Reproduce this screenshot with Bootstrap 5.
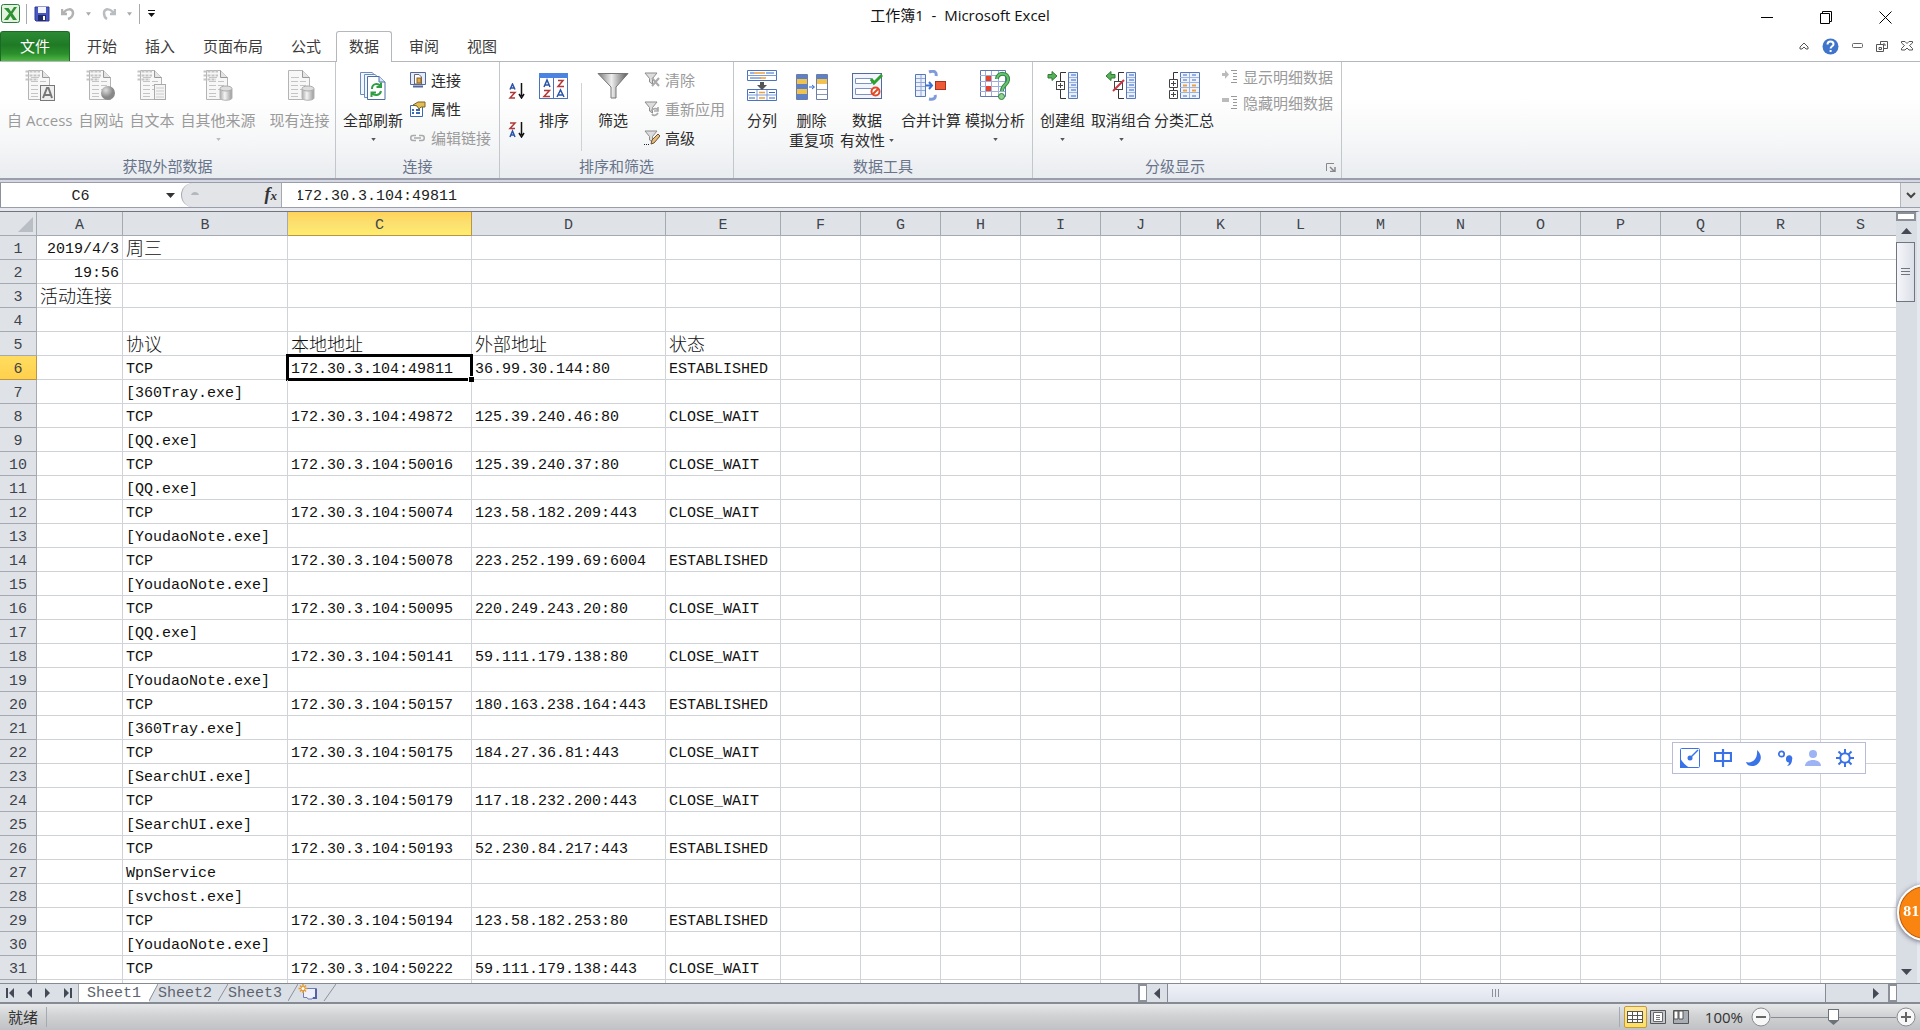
<!DOCTYPE html>
<html lang="zh-CN">
<head>
<meta charset="utf-8">
<meta name="viewport" content="width=device-width, initial-scale=1">
<title>工作簿1 - Microsoft Excel</title>
<link href="https://cdn.jsdelivr.net/npm/bootstrap@5.3.0/dist/css/bootstrap.min.css" rel="stylesheet">
<style>
  :root { --line: #8b909a; --steel: #dfe3e8; --ui: "Open Sans", "Noto Sans CJK SC", sans-serif; --mono: "Liberation Mono", "Noto Sans CJK SC", monospace; }
  body { font-family: var(--ui); font-size: 15px; line-height: 20px; color: #2b2b2b; background: #fff; }
  button { font: inherit; color: inherit; background: none; border: 0; padding: 0; }
  svg { display: block; flex: none; }
  .titlebar { height: 31px; }
  .titlebar h1 { font-size: 15px; line-height: 20px; font-weight: 400; color: #111; padding-top: 5px; }
  .side { flex: 1 1 0; }
  .quick { height: 20px; gap: 7px; }
  .vsep { width: 1px; background: #a5a9b0; }
  .tabs { height: 31px; border-bottom: 1px solid #b4b7bc; }
  .tabs .nav-link { height: 30px; padding: 4px 14px 0 12px; color: #3c3c3c; border: 1px solid transparent; border-bottom: 0; border-radius: 3px 3px 0 0; line-height: 20px; white-space: nowrap; }
  .tabs .nav-link.active { height: 31px; background: #fff; border-color: #b4b7bc; padding: 4px 12px 0; }
  .tabs .nav-link.file { width: 70px; padding: 4px 0 0; text-align: center; color: #fff; background: linear-gradient(#2c8a35, #1f7a25 45%, #2b8f2b 75%, #52b948); border-color: #1c6b24; }
  .wintools { gap: 13px; padding-right: 7px; }
  .ribbon { height: 118px; background: linear-gradient(#fff 30%, #f5f6f7 70%, #e9ecf0); border-bottom: 2px solid #9a9eab; }
  .group { border-right: 1px solid #c3c6cb; display: flex; flex-direction: column; }
  .group-body { flex: 1 1 0; min-height: 0; display: flex; align-items: flex-start; padding: 5px 4px 0; }
  .group-name { flex: none; text-align: center; color: #68748a; height: 22px; line-height: 20px; position: relative; }
  .g-ext { width: 336px; } .g-link { width: 164px; } .g-sort { width: 234px; } .g-tool { width: 299px; } .g-out { width: 309px; }
  .big { display: flex; flex-direction: column; align-items: center; margin-top: 3px; padding: 0 3px; white-space: nowrap; line-height: 20px; }
  .big svg.pic { width: 32px; height: 32px; margin-bottom: 8px; }
  .big .caret { margin-top: 8px; }
  .small-btn { display: flex; align-items: center; gap: 5px; white-space: nowrap; height: 20px; }
  button:disabled { color: #9a9a9a; }
  .stack { display: flex; flex-direction: column; gap: 9px; margin-top: 3px; }
  .stack.tight { gap: 6px; margin-top: 0; }
  .gsep { width: 1px; height: 68px; background: #d0d2d6; }
  .launcher { position: absolute; right: 5px; top: 7px; }
  .formula { height: 31px; background: linear-gradient(#d5d7e2 0 2px, #9a9eab 2px 3px, #fff 3px 27px, #9a9eab 27px 28px, #e6e8ee 28px 31px); padding: 3px 0 4px; }
  .formula input { border: 0; outline: 0; background: #fff; font-family: var(--mono); font-size: 15px; color: #222; height: 24px; padding: 3px 0 0; }
  .namebox { width: 160px; text-align: center; border-left: 1px solid var(--line) !important; }
  .fxzone { width: 101px; background: #e2e4e8; border-radius: 14px 0 0 14px; border: 1px solid #a5a9b0; border-width: 0 1px; }
  .fxname { font: italic bold 18px/20px "Liberation Serif", serif; color: #333; }
  .fxname small { font-size: 13px; }
  .expand { width: 20px; background: #e2e4e8; border-left: 1px solid #b4b7bc; }
  .gridwrap { flex: 1 1 0; min-height: 0; }
  .viewport { overflow: hidden; flex: 1 1 0; min-width: 0; }
  table.cells { table-layout: fixed; border-collapse: separate; border-spacing: 0; width: 2141px; font-family: var(--mono); font-size: 15px; color: #111; border-top: 1px solid #70757e; }
  .cells th, .cells td { height: 24px; line-height: 18px; padding: 5px 3px 0; border-right: 1px solid #d0d4d8; border-bottom: 1px solid #d0d4d8; white-space: nowrap; position: relative; font-weight: 400; }
  .cells th { background: var(--steel); color: #3f444c; text-align: center; border-color: #a5aab2; }
  .cells td.han { font-size: 18px; font-weight: 300; padding-left: 3px; }
  .cells td.num { text-align: right; }
  .cells th.on { background: linear-gradient(#ffd35a, #fbe070 50%, #ffed6e); border-color: #b8954a; }
  .cells tbody th.on { background: linear-gradient(#ffdd60, #ffd04c); }
  td.cur::before { content: ""; position: absolute; inset: -2px; border: 3px solid #000; }
  td.cur::after { content: ""; position: absolute; z-index: 1; right: -3px; bottom: -3px; width: 6px; height: 6px; background: #000; border: 1px solid #fff; border-width: 1px 0 0 1px; }
  .corner { position: absolute; right: 3px; bottom: 3px; }
  .vscroll { width: 24px; background: #d9dde4; border-top: 1px solid #70757e; border-right: 3px solid #e6e8f0; }
  .split-v { width: 20px; height: 9px; border: 2px solid #8b909a; background: #fff; }
  .thumb-v { width: 19px; height: 60px; border: 1px solid #70757e; background: linear-gradient(90deg, #f5f6fa, #dcdfe8); }
  .sheetbar { height: 21px; background: #dbe0e7; border-top: 1px solid #858a93; border-bottom: 2px solid #858a93; }
  .navs { width: 79px; gap: 12px; padding-left: 6px; border-right: 1px solid #a5a9b0; }
  .sheet-tab { font-family: var(--mono); font-size: 15px; line-height: 17px; color: #5e646e; text-decoration: none; padding: 1px 0 0; width: 60px; height: 18px; }
  .sheet-tab.active { background: #fff; width: 70px; padding-left: 8px; }
  .split-h { width: 9px; background: #fff; border: 2px solid #8b909a; border-right-width: 1px; }
  .thumb-h { flex: 1; border: 1px solid #858a93; border-width: 0 1px; background: linear-gradient(#f0f2f8, #dfe3ec); }
  .hscroll { width: 782px; }
  .arrow-box { width: 20px; }
  .status { height: 26px; background: linear-gradient(#e6e7e9, #d0d2d4 45%, #bfc1c4); color: #333; }
  .view { width: 23px; height: 22px; }
  .view.active { border: 1px solid #c49a3a; border-radius: 2px; background: linear-gradient(#ffe79a, #ffdf5f); }
  .zoombar { width: 125px; height: 22px; appearance: none; background: linear-gradient(#888c92, #888c92) center/100% 1px no-repeat; margin: 0; }
  .zoombar::-webkit-slider-thumb { appearance: none; width: 11px; height: 16px; clip-path: polygon(0 0, 100% 0, 100% 70%, 50% 100%, 0 70%); background: linear-gradient(#fff, #fff) center 1px/9px 10px no-repeat, #6d7178; }
  .ime { position: fixed; right: 54px; top: 742px; width: 194px; height: 32px; background: #fff; border: 1px solid #b9bcd6; padding: 0 7px; z-index: 5; }
  .ball { position: fixed; right: -34px; top: 884px; width: 57px; height: 57px; border-radius: 50%; background: #f98410; border: 2px solid #fff; box-shadow: inset 0 0 0 1px #b9601a, 0 1px 5px #667; color: #fff; font: bold 12px/53px "DejaVu Serif", serif; text-align: left; padding-left: 4px; z-index: 6; }
</style>
</head>
<body class="vh-100 d-flex flex-column overflow-hidden">

<svg width="0" height="0" class="position-absolute" aria-hidden="true">
  <defs>
    <linearGradient id="funnelFill"><stop offset="0" stop-color="#777"/><stop offset=".45" stop-color="#eee"/><stop offset="1" stop-color="#555"/></linearGradient>
    <linearGradient id="cyl"><stop offset="0" stop-color="#aaa"/><stop offset=".4" stop-color="#f4f4f4"/><stop offset="1" stop-color="#999"/></linearGradient>
    <radialGradient id="globe" cx=".35" cy=".3"><stop offset="0" stop-color="#ddd"/><stop offset="1" stop-color="#888"/></radialGradient>
    <symbol id="doc" viewBox="0 0 32 32"><path d="M4.500.5H18.500L25.500 7.500V29.500H4.500Z" fill="#f7f7f7" stroke="#b4b4b4"/><path d="M18.500.5V7.500H25.500" fill="#e4e4e4" stroke="#999"/><path d="M7 11.500H14M16 11.500H22M7 15.500H14M16 15.500H22M7 19.500H14M16 19.500H22M7 23.500H14M7 26.500H14M7 7.500H15" stroke="#c4c4c4"/></symbol>
    <symbol id="dotted" viewBox="0 0 32 32"><path d="M1.500 1.500H16M1.500 5.500H16M1.500 9.500H14" stroke="#c4c4c4" stroke-width="2" stroke-dasharray="3 1"/></symbol>
    <symbol id="drum" viewBox="0 0 32 32"><path d="M18 19V28C18 31 30 31 30 28V19Z" fill="url(#cyl)" stroke="#b4b4b4"/><ellipse cx="24" cy="18.500" rx="6" ry="2.500" fill="#ddd" stroke="#aaa"/></symbol>
    <symbol id="down" viewBox="0 0 6 4"><path d="M0 0H6L3 4Z" fill="currentColor"/></symbol>
    <symbol id="filter" viewBox="0 0 16 16"><path d="M1 1H13L8.500 6.500V12L5.500 10V6.500Z" fill="#ddd" stroke="#8d8d8d"/></symbol>
    <symbol id="outline" viewBox="0 0 32 32"><path d="M21.500 2.500H30.500V28.500H21.500Z" fill="#e9f0fc" stroke="#5877b8"/><path d="M22 7.500H30M22 12.500H30M22 17.500H30M22 22.500H30" stroke="#9db2dc"/><path d="M24 5H29M24 10H29M24 15H29M24 20H29M24 26H29" stroke="#2c66d0"/><path d="M19 2.500H13.500V11M13.500 20V28.500H19" fill="none" stroke="#333"/></symbol>
  </defs>
</svg>

<header>
  <div class="titlebar d-flex">
    <div class="side d-flex align-items-start pt-1">
      <svg width="22" height="20" viewBox="0 0 22 20"><rect x="1.500" y=".5" width="18" height="18" rx="2" fill="#e3f2df" stroke="#2a7d3b"/><path d="M4 4H8.500L11 7.500L14 3H17L12.500 9.500L17 16H13L10.500 12L8 16H4L9 9.500Z" fill="#2e9135"/></svg>
      <div class="quick d-flex align-items-center ps-1">
        <span class="vsep h-100"></span>
        <button aria-label="保存"><svg width="16" height="16" viewBox="0 0 16 16"><path d="M1 1H15V15H2L1 14Z" fill="#4a58c4" stroke="#2e3b94"/><rect x="4" y="1" width="8" height="6" fill="#f4f6ff"/><rect x="4" y="9" width="8" height="6" fill="#222c6b"/><rect x="9" y="10" width="2" height="4" fill="#fff"/></svg></button>
        <button class="ms-1" aria-label="撤消" disabled><svg width="14" height="16" viewBox="0 0 14 16"><path d="M1 3V8H6M2 8C5 2 12 2 12 7C12 10 10 12 7 13" fill="none" stroke="#b2b2b2" stroke-width="2.500"/></svg></button>
        <svg class="ms-1" width="5" height="4" color="#aaa"><use href="#down"/></svg>
        <button class="ms-1" aria-label="恢复" disabled><svg width="14" height="16" viewBox="0 0 14 16"><path d="M13 3V8H8M12 8C9 2 2 2 2 7C2 10 3 12 5 13" fill="none" stroke="#b9bcc0" stroke-width="2.500"/></svg></button>
        <svg class="ms-1" width="5" height="4" color="#aaa"><use href="#down"/></svg>
        <span class="vsep h-100"></span>
        <button aria-label="自定义快速访问工具栏"><svg width="9" height="8" viewBox="0 0 9 8"><path d="M1 .5H8" stroke="#111"/><path d="M1 3H8L4.500 7Z" fill="#111"/></svg></button>
      </div>
    </div>
    <h1 class="mb-0 ps-4">工作簿1&nbsp; -&nbsp; Microsoft Excel</h1>
    <div class="side d-flex justify-content-end align-items-center pe-4 pt-1">
      <div class="d-flex pe-1" style="gap:46px">
        <button aria-label="最小化"><svg width="13" height="13"><path d="M0 6.500H12" stroke="#000"/></svg></button>
        <button aria-label="还原"><svg width="13" height="13"><path d="M.5 2.500H9.500V12.500H.5ZM2.500 2V.5H11.500V10.500H10" fill="none" stroke="#000"/></svg></button>
        <button aria-label="关闭"><svg width="13" height="13"><path d="M.5.5L12.500 12.500M12.500.5L.5 12.500" stroke="#000"/></svg></button>
      </div>
    </div>
  </div>
  <nav class="tabs d-flex">
    <a class="nav-link file" href="#">文件</a>
    <div class="d-flex ps-1">
      <a class="nav-link" href="#">开始</a><a class="nav-link" href="#">插入</a><a class="nav-link" href="#">页面布局</a><a class="nav-link" href="#">公式</a><a class="nav-link active" href="#" aria-current="page">数据</a><a class="nav-link ms-1" href="#">审阅</a><a class="nav-link" href="#">视图</a>
    </div>
    <div class="wintools ms-auto d-flex align-items-center">
      <button aria-label="功能区最小化"><svg width="10" height="8"><path d="M1 5L5 1L9 5V7H7L5 5L3 7H1Z" fill="none" stroke="#555"/></svg></button>
      <button aria-label="帮助"><svg width="17" height="17" viewBox="0 0 17 17"><circle cx="8.500" cy="8.500" r="8" fill="#3f74cb"/><path d="M5.500 6.500C5.500 2.500 11.500 2.800 11.500 6.200C11.500 8.300 8.600 8.200 8.600 10.500M8.600 12V14" fill="none" stroke="#fff" stroke-width="2"/></svg></button>
      <button aria-label="最小化工作簿"><svg width="11" height="6"><rect x=".5" y=".5" width="10" height="4" rx="1" fill="none" stroke="#666"/></svg></button>
      <button aria-label="还原工作簿"><svg width="12" height="11"><path d="M.5 3.500H7.500V10.500H.5ZM3 6.500H5.500V8.500H3ZM4.500 3V.5H11.500V7.500H8M7 3H9V5" fill="none" stroke="#555"/></svg></button>
      <button aria-label="关闭工作簿"><svg width="12" height="10"><path d="M.5.5H4L6 2.500L8 .5H11.500V2L8.500 4.500L11.500 7.500V9H8L6 7L4 9H.5V7.500L3.500 4.500L.5 2Z" fill="none" stroke="#555"/></svg></button>
    </div>
  </nav>
</header>

<section class="ribbon d-flex" aria-label="数据">
  <div class="group g-ext">
    <div class="group-body">
      <button class="big" disabled><svg class="pic"><use href="#doc"/><use href="#dotted"/><rect x="16.500" y="15.500" width="14" height="15" fill="#eee" stroke="#777"/><path d="M19 28L23 18H24.500L28 28M20.500 25H26.500" fill="none" stroke="#777" stroke-width="2"/></svg>自 Access</button>
      <button class="big" disabled><svg class="pic"><use href="#doc"/><use href="#dotted"/><circle cx="23" cy="23" r="7" fill="url(#globe)"/></svg>自网站</button>
      <button class="big" disabled><svg class="pic"><use href="#doc"/><use href="#dotted"/><rect x="18.500" y="14.500" width="11" height="15" fill="#f4f4f4" stroke="#aaa"/><path d="M20 18H28M20 21H28M20 24H28M20 27H28" stroke="#ccc"/></svg>自文本</button>
      <button class="big" disabled><svg class="pic"><use href="#doc"/><use href="#dotted"/><use href="#drum"/></svg>自其他来源<svg class="caret" width="5" height="3" color="#bbb"><use href="#down"/></svg></button>
      <span class="gsep mt-2 ms-1 me-1"></span>
      <button class="big" disabled><svg class="pic"><use href="#doc"/><use href="#drum"/></svg>现有连接</button>
    </div>
    <div class="group-name">获取外部数据</div>
  </div>

  <div class="group g-link">
    <div class="group-body">
      <button class="big"><svg class="pic"><path d="M3.500 2.500H15L20 7V24.500H3.500Z" fill="#f2f7ff" stroke="#6c8cc0"/><path d="M7.500 4.500H18L23 9V27.500H7.500Z" fill="#f2f7ff" stroke="#6c8cc0"/><path d="M10.500 6.500H22L28 12V29.500H10.500Z" fill="#fff" stroke="#4c6ea8"/><path d="M22 6.500V12H28" fill="#d6e4fa" stroke="#4c6ea8"/><path d="M15 19C15 13 21 13 23.500 16M24 12.500V17H19.500M24 21C23 26 17 26 15 23M14.500 27V22.500H19" fill="none" stroke="#2ea043" stroke-width="2"/></svg>全部刷新<svg class="caret" width="5" height="3" color="#555"><use href="#down"/></svg></button>
      <div class="stack ms-1">
        <button class="small-btn"><svg width="16" height="16"><path d="M.5.5H15.500V12.500H.5Z" fill="#e6edf8" stroke="#53679b"/><path d="M4.500 2.500H9L11.500 5V12H4.500Z" fill="#fff" stroke="#667"/><rect x="7" y="6" width="4" height="5" fill="#e3a94a" stroke="#8a6526"/><path d="M3 14.500H13" stroke="#53679b" stroke-width="2"/></svg>连接</button>
        <button class="small-btn"><svg width="16" height="16"><path d="M.5 4.500H12.500V15.500H.5Z" fill="#fff" stroke="#3a6ab5"/><path d="M2 9H4M2 12H4M6 9H10M6 12H10" stroke="#3a6ab5" stroke-width="2"/><path d="M3 4L8 1H15V6H11L9 8L7 5Z" fill="#e2bd55" stroke="#7d6420"/></svg>属性</button>
        <button class="small-btn" disabled><svg width="16" height="16"><path d="M6 5.500H3C0 5.500 0 10.500 3 10.500H6M9 5.500H12C15 5.500 15 10.500 12 10.500H9M4 8H11" fill="none" stroke="#aaa" stroke-width="1.500"/></svg>编辑链接</button>
      </div>
    </div>
    <div class="group-name">连接</div>
  </div>

  <div class="group g-sort">
    <div class="group-body">
      <div class="d-flex flex-column ps-1 pt-3" style="gap:23px">
        <button aria-label="升序"><svg width="18" height="16"><path d="M2 6.500L4.500 1L7 6.500M3 5H6" fill="none" stroke="#2b55a8" stroke-width="1.500"/><path d="M2 9.500H7L2 15H7" fill="none" stroke="#b03a3a" stroke-width="1.500"/><path d="M13.500 0V13M11 11L13.500 15L16 11" fill="none" stroke="#111" stroke-width="1.500"/></svg></button>
        <button aria-label="降序"><svg width="18" height="16"><path d="M2 1H7L2 6.500H7" fill="none" stroke="#b03a3a" stroke-width="1.500"/><path d="M2 15L4.500 9L7 15M3 13H6" fill="none" stroke="#2b55a8" stroke-width="1.500"/><path d="M13.500 0V13M11 11L13.500 15L16 11" fill="none" stroke="#111" stroke-width="1.500"/></svg></button>
      </div>
      <button class="big ms-2 ps-1"><svg class="pic"><rect x="1.500" y="3.500" width="28" height="25" fill="#fff" stroke="#4a72c0"/><rect x="1" y="3" width="29" height="5" fill="#4a84e0"/><path d="M15.500 8V28" stroke="#4a72c0"/><path d="M6 17L9 10L12 17M7 15H11M19 27L22.500 20L26 27M20 25H25" fill="none" stroke="#2b55a8" stroke-width="1.500"/><path d="M6 20.500H11.500L6 26.500H12M20 10.500H25L20 16.500H26" fill="none" stroke="#b03a3a" stroke-width="1.500"/></svg>排序</button>
      <span class="gsep mt-3 ms-2 me-2"></span>
      <button class="big ms-1"><svg class="pic"><path d="M1 3.500H31L19 17V28H14V17Z" fill="url(#funnelFill)" stroke="#777"/></svg>筛选</button>
      <div class="stack ms-2 ps-1">
        <button class="small-btn" disabled><svg width="16" height="16"><use href="#filter"/><path d="M8 6L15 14M15 6L8 14" stroke="#aaa" stroke-width="2"/></svg>清除</button>
        <button class="small-btn" disabled><svg width="16" height="16"><use href="#filter"/><path d="M7 10C9 7 13 7 14 9M14 6V10H10M14 12C12 15 9 15 8 13" fill="none" stroke="#aaa" stroke-width="1.700"/></svg>重新应用</button>
        <button class="small-btn"><svg width="16" height="16"><use href="#filter"/><path d="M7 14L8 10L14 4L16 6L10 13Z" fill="#e8bd7a" stroke="#6b5136"/><path d="M0 14.500H6" stroke="#222" stroke-dasharray="1 1"/></svg>高级</button>
      </div>
    </div>
    <div class="group-name">排序和筛选</div>
  </div>

  <div class="group g-tool">
    <div class="group-body">
      <button class="big ms-1 ps-1"><svg class="pic"><path d="M1.500.5H30.500V10.500H1.500ZM1.500 19.500H30.500V30.500H1.500Z" fill="#fff" stroke="#4a72c0"/><path d="M1.500 5.500H30.500M1.500 25H30.500M11 20V30M21 20V30" stroke="#7d9bd6"/><path d="M4 3H8M20 3H28M4 8H15M3 22.500H9M23 22.500H29M3 28H9M23 28H29" stroke="#3569c4"/><path d="M8 3H19M14 8H20M13 22.500H19M13 28H19" stroke="#eda13c" stroke-width="1.500"/><path d="M14 12H18V15H21L16 20L11 15H14Z" fill="#555"/></svg>分列</button>
      <button class="big ms-1 ps-1"><svg class="pic"><path d="M.5 4.500H11.500V29.500H.5ZM20.500 4.500H31.500V29.500H20.500Z" fill="#fff" stroke="#6b7ea8"/><path d="M1 5H11V9H1ZM1 14H11V19H1ZM1 24H11V29H1ZM21 5H31V9H21Z" fill="#5d80c6"/><path d="M1 9H11V14H1ZM1 19H11V24H1ZM21 9H31V14H21Z" fill="#f2c24e"/><path d="M21 19.500H31M21 24.500H31" stroke="#8b98b5"/><path d="M13 17H18M16 15L18.500 17L16 19" fill="none" stroke="#2b66d0"/></svg>删除<br>重复项</button>
      <button class="big"><svg class="pic"><rect x="1.500" y="3.500" width="29" height="25" fill="#f2f5fc" stroke="#54699c"/><path d="M4.500 8.500H20.500V13.500H4.500ZM4.500 18.500H20.500V24.500H4.500Z" fill="#fff" stroke="#7e93c2"/><path d="M20 9L23 13L31 5" fill="none" stroke="#2da02d" stroke-width="3"/><circle cx="24.500" cy="21.500" r="4" fill="#fff" stroke="#e04a25" stroke-width="2"/><path d="M21.500 24.500L27.500 18.500" stroke="#e04a25" stroke-width="2"/></svg>数据<span class="d-flex align-items-center gap-1">有效性 <svg width="5" height="3" color="#555"><use href="#down"/></svg></span></button>
      <button class="big ps-1 pe-0"><svg class="pic"><path d="M.5 4.500H10.500V26.500H.5Z" fill="#eaf0fc" stroke="#5877b8"/><path d="M1 8.500H10M1 12.500H10M1 16.500H10M1 20.500H10M6 5V26" stroke="#8fa6d6"/><path d="M11 15.500H16M14 12L17 15.500L14 19" fill="none" stroke="#3c72d4" stroke-width="2"/><path d="M14 2C19 0 22 2 21 6M14 29C19 30 21 28 20 25" fill="none" stroke="#7f9bdb" stroke-width="3"/><rect x="20.500" y="11.500" width="10" height="8" fill="#ee5a35" stroke="#a8331d"/></svg>合并计算</button>
      <button class="big ms-1 px-0"><svg class="pic"><path d="M1.500.5H26.500V26.500H1.500Z" fill="#fff" stroke="#6077b0"/><path d="M1 5.500H26M1 11.500H26M1 16.500H26M1 21.500H26M6.500 1V26M12.500 1V26M19.500 1V26" stroke="#9dafdc"/><path d="M7 6H12V11H7ZM7 16H12V21H7Z" fill="#e8432a"/><path d="M18 9C18 2 30 2 29 10C28.500 15 23 15 23 21" fill="none" stroke="#2f8a3c" stroke-width="4"/><path d="M18 9C18 2 30 2 29 10C28.500 15 23 15 23 21" fill="none" stroke="#6cc274" stroke-width="2"/><circle cx="22.500" cy="26.500" r="3" fill="#8fd08f" stroke="#2b8538"/></svg>模拟分析<svg class="caret" width="5" height="3" color="#555"><use href="#down"/></svg></button>
    </div>
    <div class="group-name">数据工具</div>
  </div>

  <div class="group g-out">
    <div class="group-body">
      <button class="big"><svg class="pic"><use href="#outline"/><path d="M1 4.500H5V1.500L10 6L5 10.500V8H1Z" fill="#58b058" stroke="#2d7d35"/><rect x="9.500" y="11.500" width="8" height="8" fill="#fff" stroke="#444"/><path d="M11 15.500H16M13.500 13V18" stroke="#444"/></svg>创建组<svg class="caret" width="5" height="3" color="#555"><use href="#down"/></svg></button>
      <button class="big"><svg class="pic"><use href="#outline"/><path d="M10 4.500H6V1.500L1 6L6 10.500V8H10Z" fill="#58b058" stroke="#2d7d35"/><rect x="9.500" y="11.500" width="8" height="8" fill="#fff" stroke="#444"/><path d="M8 21L19 10" stroke="#cc3344" stroke-width="2"/></svg>取消组合<svg class="caret" width="5" height="3" color="#555"><use href="#down"/></svg></button>
      <button class="big px-0"><svg class="pic"><path d="M12.500 2.500H31.500V28.500H12.500Z" fill="#eef3fd" stroke="#5877b8"/><path d="M12 7.500H31M12 12.500H31M12 17.500H31M12 22.500H31M21.500 3V28" stroke="#9db2dc"/><path d="M15 5H19M24 5H28M15 10H19M24 10H28M15 26H19M24 26H28" stroke="#3b6bca"/><path d="M15 15.500H19M24 15.500H28M15 20.500H19M24 20.500H28" stroke="#eda13c" stroke-width="2"/><path d="M10 2.500H5.500V9M5.500 17V20" fill="none" stroke="#333"/><path d="M1.500 9.500H9.500V17.500H1.500ZM1.500 20.500H9.500V28.500H1.500Z" fill="#fff" stroke="#444"/><path d="M3 13.500H8M5.500 11V16M3 24.500H8M5.500 22V27" stroke="#444"/></svg>分类汇总</button>
      <div class="stack tight ms-2">
        <button class="small-btn" disabled><svg width="16" height="16"><path d="M0 4H3V1L7 5.500L3 10V7H0Z" fill="#bbb"/><path d="M9 1.500H15M11 4.500H15M11 7.500H15M11 10.500H15M9 13.500H15" stroke="#999"/></svg>显示明细数据</button>
        <button class="small-btn" disabled><svg width="16" height="16"><rect x="0" y="3" width="7" height="4" fill="#bbb"/><path d="M9 1.500H15M11 4.500H15M11 7.500H15M11 10.500H15M9 13.500H15" stroke="#999"/></svg>隐藏明细数据</button>
      </div>
    </div>
    <div class="group-name pe-4">分级显示<button class="launcher" aria-label="分级显示设置"><svg width="10" height="9"><path d="M.5 8V.5H8" fill="none" stroke="#888"/><path d="M4 4L8 8M9 4V8.500H4" fill="none" stroke="#888" stroke-width="1.500"/></svg></button></div>
  </div>
</section>

<section class="formula d-flex">
  <input class="namebox" value="C6" aria-label="名称框">
  <button class="d-flex align-items-center justify-content-center" style="width:21px" aria-label="名称列表"><svg width="9" height="5"><path d="M0 0H9L4.500 5Z" fill="#333"/></svg></button>
  <div class="fxzone d-flex align-items-center justify-content-between ps-2 pe-1"><svg width="10" height="10" viewBox="0 0 10 10"><path d="M1 5C2 1 8 1 9 5Z" fill="#b4b7bd"/></svg><button class="fxname" aria-label="插入函数">f<small>x</small></button></div>
  <input class="flex-grow-1 ps-3" style="text-indent:-3px" value="172.30.3.104:49811" aria-label="编辑栏">
  <button class="expand d-flex align-items-center justify-content-center" aria-label="展开编辑栏"><svg width="10" height="7"><path d="M1 1L5 5L9 1" fill="none" stroke="#444" stroke-width="2"/></svg></button>
</section>

<main class="gridwrap d-flex">
  <div class="viewport">
    <table class="cells"><colgroup id="cols"></colgroup><thead><tr id="heads"></tr></thead><tbody id="rows"></tbody></table>
  </div>
  <div class="vscroll d-flex flex-column align-items-start">
    <div class="split-v"></div>
    <button class="d-flex align-items-center justify-content-center w-100 flex-shrink-0" style="height:21px" aria-label="向上滚动"><svg width="11" height="7"><path d="M0 6H11L5.500 0Z" fill="#444a55"/></svg></button>
    <div class="thumb-v d-flex align-items-center justify-content-center"><svg width="9" height="9"><path d="M0 .5H9M0 3.500H9M0 6.500H9" stroke="#70757e"/></svg></div>
    <button class="mt-auto d-flex align-items-center justify-content-center w-100" style="height:22px" aria-label="向下滚动"><svg width="11" height="7"><path d="M0 0H11L5.500 6Z" fill="#444a55"/></svg></button>
  </div>
</main>

<footer>
  <div class="sheetbar d-flex">
    <div class="navs d-flex align-items-center">
      <button aria-label="第一张"><svg width="9" height="10"><path d="M1 0V10" stroke="#444a55" stroke-width="2"/><path d="M8 0V10L3 5Z" fill="#444a55"/></svg></button>
      <button aria-label="上一张"><svg width="6" height="10"><path d="M5 0V10L0 5Z" fill="#444a55"/></svg></button>
      <button aria-label="下一张"><svg width="6" height="10"><path d="M0 0V10L5 5Z" fill="#444a55"/></svg></button>
      <button aria-label="最后一张"><svg width="9" height="10"><path d="M8 0V10" stroke="#444a55" stroke-width="2"/><path d="M1 0V10L6 5Z" fill="#444a55"/></svg></button>
    </div>
    <a class="sheet-tab active" href="#">Sheet1</a>
    <svg width="9" height="18"><path d="M0 0H9L0 16Z" fill="#fff"/><path d="M9 0L0 17" stroke="#8b909a"/></svg>
    <a class="sheet-tab" href="#">Sheet2</a>
    <svg width="10" height="18"><path d="M10 0L0 17" stroke="#8b909a"/></svg>
    <a class="sheet-tab" href="#">Sheet3</a>
    <svg width="10" height="18"><path d="M10 0L0 17" stroke="#8b909a"/></svg>
    <button aria-label="插入工作表"><svg width="22" height="18"><path d="M5.500 4.500H18.500V13.500H15L14 15H10L9 13.500H5.500Z" fill="#eef1fb" stroke="#6f7db5"/><path d="M18 5V14H15" fill="none" stroke="#5463a5" stroke-width="2"/><path d="M5 0V9M.5 4.500H9.500M2 1.500L8 7.500M8 1.500L2 7.500" stroke="#e39a33" stroke-width="1.500"/><circle cx="5" cy="4.500" r="1.500" fill="#fff"/></svg></button>
    <svg width="16" height="18"><path d="M16 0L4 17" stroke="#8b909a"/></svg>
    <div class="hscroll ms-auto d-flex">
      <span class="split-h"></span>
      <button class="arrow-box d-flex align-items-center justify-content-center" aria-label="向左滚动"><svg width="7" height="11"><path d="M6 0V11L0 5.500Z" fill="#444a55"/></svg></button>
      <div class="thumb-h d-flex align-items-center justify-content-center"><svg width="9" height="9"><path d="M.5 0V8M3.500 0V8M6.500 0V8" stroke="#8b909a"/></svg></div>
      <button class="d-flex align-items-center justify-content-end pe-2" style="width:62px" aria-label="向右滚动"><svg width="7" height="11"><path d="M0 0V11L6 5.500Z" fill="#444a55"/></svg></button>
      <span class="split-h"></span>
      <span style="width:23px"></span>
    </div>
  </div>
  <div class="status d-flex align-items-center">
    <span class="ps-2">就绪</span><span class="vsep h-75 ms-2"></span>
    <div class="ms-auto d-flex align-items-center h-100">
      <span class="vsep h-75 me-1"></span>
      <button class="view active d-flex align-items-center justify-content-center" aria-label="普通"><svg width="16" height="13"><path d="M0 0H16V12H0Z" fill="#555"/><path d="M1 1H5V4H1ZM6 1H10V4H6ZM11 1H15V4H11ZM1 5H5V8H1ZM6 5H10V8H6ZM11 5H15V8H11ZM1 9H5V11H1ZM6 9H10V11H6ZM11 9H15V11H11Z" fill="#fff"/></svg></button>
      <button class="view d-flex align-items-center justify-content-center" aria-label="页面布局"><svg width="16" height="14"><path d="M.5.5H15.500V13.500H.5Z" fill="#c4c8d0" stroke="#555"/><path d="M3.500 2.500H12.500V11.500H3.500Z" fill="#fff" stroke="#666"/><path d="M6 5.500H10M6 7.500H10M6 9.500H10" stroke="#777"/></svg></button>
      <button class="view d-flex align-items-center justify-content-center" aria-label="分页预览"><svg width="16" height="14"><path d="M.5.5H15.500V13.500H.5Z" fill="#a8adb6" stroke="#555"/><path d="M1 1H5V9H1ZM6 1H10V9H6Z" fill="#fff" stroke="#555"/></svg></button>
      <button class="ms-2 ps-1 pe-2">100%</button>
      <button aria-label="缩小"><svg width="20" height="20"><circle cx="10" cy="10" r="9" fill="#f7f7f7" stroke="#888c92"/><path d="M5 10H15" stroke="#666" stroke-width="2"/></svg></button>
      <input class="zoombar" type="range" aria-label="显示比例" min="0" max="200" value="100">
      <button aria-label="放大"><svg width="20" height="20"><circle cx="10" cy="10" r="9" fill="#f7f7f7" stroke="#888c92"/><path d="M5 10H15M10 5V15" stroke="#666" stroke-width="2"/></svg></button>
      <span class="ps-1"></span>
    </div>
  </div>
</footer>

<div class="ime d-flex align-items-center justify-content-between">
  <svg width="20" height="20"><rect x=".5" y=".5" width="19" height="19" rx="1" fill="#fff" stroke="#3a72e8"/><path d="M0 10Q4 17 10 20H0Z" fill="#3a72e8"/><circle cx="10" cy="10" r="2.500" fill="#3a72e8"/><path d="M10 10L18 2" stroke="#3a72e8" stroke-width="1.500"/></svg>
  <svg class="ms-2" width="18" height="18"><path d="M1 4H17V12H1ZM9 0V18" fill="none" stroke="#3a72e8" stroke-width="2.200"/></svg>
  <svg class="ms-2" width="18" height="18"><path d="M12 1C20 8 14 17 7 17C4 17 2 16 1 13C8 15 13 9 12 1Z" fill="#3a72e8"/></svg>
  <svg class="ms-2" width="18" height="18"><circle cx="4.500" cy="5" r="2.700" fill="none" stroke="#3a72e8" stroke-width="1.700"/><path d="M9 10A3.200 3.200 0 1 1 15 11C15 14 13 17 10 17C11 16 12 15 12 13.500A3 3 0 0 1 9 10Z" fill="#3a72e8"/></svg>
  <svg class="ms-1" width="18" height="18"><circle cx="9" cy="5" r="4" fill="#9db3f4"/><path d="M1 17C1 9 17 9 17 17Z" fill="#9db3f4"/></svg>
  <svg class="ms-2 me-1" width="18" height="18"><circle cx="9" cy="9" r="4.800" fill="none" stroke="#3a72e8" stroke-width="2"/><path d="M9 0V4M9 14V18M0 9H4M14 9H18M2.500 2.500L5.500 5.500M12.500 12.500L15.500 15.500M2.500 15.500L5.500 12.500M12.500 5.500L15.500 2.500" stroke="#3a72e8" stroke-width="2"/></svg>
</div>
<button class="ball">81</button>

<script>
  const widths = [37, 86, 165, 184, 194, 115, ...Array(17).fill(80)];
  const C = 'CLOSE_WAIT', E = 'ESTABLISHED', ip = '172.30.3.104:';
  const data = [
    ['2019/4/3', '周三'], ['19:56'], ['活动连接'], [], ['', '协议', '本地地址', '外部地址', '状态'],
    ['', 'TCP', ip + '49811', '36.99.30.144:80', E], ['', '[360Tray.exe]'],
    ['', 'TCP', ip + '49872', '125.39.240.46:80', C], ['', '[QQ.exe]'],
    ['', 'TCP', ip + '50016', '125.39.240.37:80', C], ['', '[QQ.exe]'],
    ['', 'TCP', ip + '50074', '123.58.182.209:443', C], ['', '[YoudaoNote.exe]'],
    ['', 'TCP', ip + '50078', '223.252.199.69:6004', E], ['', '[YoudaoNote.exe]'],
    ['', 'TCP', ip + '50095', '220.249.243.20:80', C], ['', '[QQ.exe]'],
    ['', 'TCP', ip + '50141', '59.111.179.138:80', C], ['', '[YoudaoNote.exe]'],
    ['', 'TCP', ip + '50157', '180.163.238.164:443', E], ['', '[360Tray.exe]'],
    ['', 'TCP', ip + '50175', '184.27.36.81:443', C], ['', '[SearchUI.exe]'],
    ['', 'TCP', ip + '50179', '117.18.232.200:443', C], ['', '[SearchUI.exe]'],
    ['', 'TCP', ip + '50193', '52.230.84.217:443', E], ['', 'WpnService'], ['', '[svchost.exe]'],
    ['', 'TCP', ip + '50194', '123.58.182.253:80', E], ['', '[YoudaoNote.exe]'],
    ['', 'TCP', ip + '50222', '59.111.179.138:443', C], []
  ];
  document.getElementById('cols').innerHTML = widths.map(w => `<col style="width:${w}px">`).join('');
  document.getElementById('heads').innerHTML = widths.map((w, i) => i === 0
    ? '<th aria-label="全选"><svg class="corner" width="15" height="15"><path d="M15 0V15H0Z" fill="#b9bdc4"/></svg></th>'
    : `<th scope="col" class="${i === 3 ? 'on' : ''}">${i < 20 ? String.fromCharCode(64 + i) : ''}</th>`).join('');
  document.getElementById('rows').innerHTML = data.map((r, n) => {
    const label = n < 31 ? n + 1 : '';
    const tds = widths.slice(1).map((w, i) => {
      const v = r[i] || '', cls = [];
      if (/[\u4e00-\u9fff]/.test(v)) cls.push('han');
      if (i === 0 && /^\d/.test(v)) cls.push('num');
      if (n === 5 && i === 2) cls.push('cur');
      return `<td class="${cls.join(' ')}">${v}</td>`;
    }).join('');
    return `<tr><th scope="row" class="${n === 5 ? 'on' : ''}">${label}</th>${tds}</tr>`;
  }).join('');
</script>
<script src="https://cdn.jsdelivr.net/npm/bootstrap@5.3.0/dist/js/bootstrap.bundle.min.js"></script>
</body>
</html>
